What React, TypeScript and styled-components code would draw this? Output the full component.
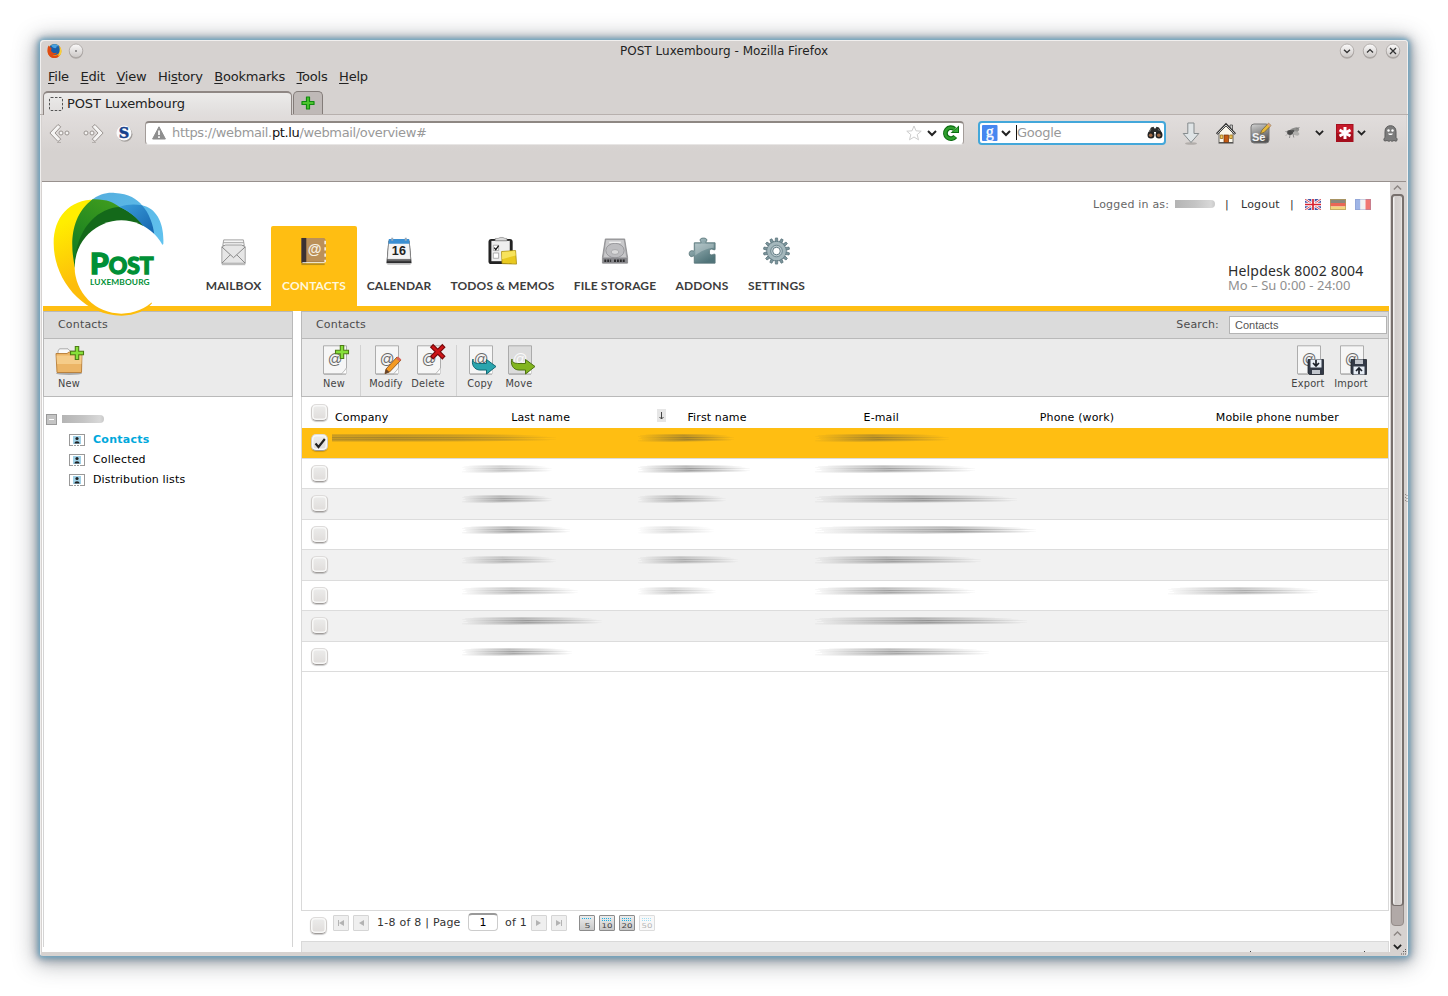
import React from "react";
import styled, { createGlobalStyle, css } from "styled-components";

const UI = `"DejaVu Sans", Verdana, sans-serif`;

const GlobalStyle = createGlobalStyle`
  * { box-sizing: border-box; }
  html, body { margin: 0; background: #fff; }
  body { font-family: ${UI}; color: #222; }
  svg { display: block; flex: none; overflow: visible; }
`;

/* ---------- window frame ---------- */

const Desktop = styled.div`
  width: 1448px;
  height: 996px;
  padding: 40px;
  overflow: hidden;
  background: #fff;
`;

const Window = styled.div`
  width: 1368px;
  height: 916px;
  display: flex;
  flex-direction: column;
  background: #d6d2d0;
  border-radius: 4px 4px 3px 3px;
  box-shadow: inset 1px 1px 0 #f1efee, inset -1px 0 0 #f1efee, 0 0 4px 1px #6aa9c8,
    0 1px 9px 3px rgba(72, 100, 122, 0.55), 0 3px 22px 5px rgba(50, 56, 66, 0.4);
`;

const TitleBar = styled.div`
  height: 24px;
  display: grid;
  grid-template-columns: 200px 1fr 200px;
  align-items: start;
  padding: 0 7px;
  font-size: 12px;
  line-height: 20px;
`;
const TitleSide = styled.div<{ $end?: boolean }>`
  display: flex;
  gap: ${(p) => (p.$end ? 7 : 6)}px;
  padding-top: 3px;
  justify-content: ${(p) => (p.$end ? "flex-end" : "flex-start")};
`;
const TitleText = styled.div`
  padding-top: 1px;
  text-align: center;
  letter-spacing: 0.03px;
`;

const MenuBar = styled.div`
  height: 26px;
  display: flex;
  align-items: center;
  gap: 11.6px;
  padding: 0 8px;
  font-size: 13px;
  line-height: 20px;
  letter-spacing: -0.22px;
`;
const MenuItem = styled.span`
  u { text-underline-offset: 2px; text-decoration-thickness: 1px; }
`;

const TabBar = styled.div`
  height: 25px;
  display: flex;
  align-items: flex-end;
  gap: 1px;
  padding: 0 2px 0 3px;
  border-bottom: 1px solid #b7b0ad;
`;
const Tab = styled.div`
  width: 249px;
  height: 24px;
  margin-bottom: -1px;
  display: flex;
  align-items: center;
  gap: 4px;
  padding: 0 5px 1px;
  border: 1px solid #8f8784;
  border-top-width: 2px;
  border-bottom: 0;
  border-radius: 5px 5px 0 0;
  background: linear-gradient(#ecebea, #e0dddc);
  font-size: 13px;
  letter-spacing: -0.1px;
`;
const NewTab = styled.div`
  width: 30px;
  height: 23px;
  display: flex;
  align-items: center;
  justify-content: center;
  border: 1px solid #837c79;
  border-bottom: 0;
  border-radius: 5px 5px 0 0;
  background: #bfb9b7;
`;

const NavBar = styled.div`
  height: 67px;
  padding: 6px 7px 0 7px;
  display: flex;
  align-items: flex-start;
  border-bottom: 1px solid #98918e;
  background: linear-gradient(#e1dddc, #d6d2d0 36px);
  margin: 0 2px;
`;
const NavIcons = styled.div`
  display: flex;
  width: 96px;
  height: 24px;
  align-items: center;
  gap: 12.5px;
`;
const Field = styled.div<{ $w: number; $active?: boolean }>`
  width: ${(p) => p.$w}px;
  height: 24px;
  display: flex;
  align-items: center;
  padding: 0 3px 1px 4px;
  border: 1px solid #a39c99;
  border-top: 2px solid #8e8783;
  border-bottom-color: #e8e6e5;
  border-radius: 4px;
  background: #fff;
  font-size: 13px;
  line-height: 18px;
  letter-spacing: -0.35px;
  color: #999;
  b { color: #111; font-weight: 400; }
  ${(p) =>
    p.$active &&
    css`
      border: 2px solid #43a7da;
      padding: 0 1px 1px;
      letter-spacing: -0.25px;
    `}
`;
const Grow = styled.span`
  flex: 1;
`;
const Caret = styled.span`
  width: 1px;
  height: 15px;
  margin-left: 5px;
  background: #111;
`;
const AddonIcons = styled.div`
  display: flex;
  align-items: center;
  height: 24px;
  margin-left: 14px;
`;
const Slot = styled.span<{ $w: number; $h?: number }>`
  width: ${(p) => p.$w}px;
  height: ${(p) => (p.$h ? p.$h + "px" : "auto")};
  display: flex;
  align-items: center;
`;

/* ---------- page ---------- */

const Viewport = styled.div`
  height: 770px;
  margin: 0 2px;
  display: flex;
  position: relative;
`;
const Page = styled.div`
  width: 1348px;
  height: 770px;
  padding: 0 1px;
  background: #fff;
  overflow: hidden;
  position: relative;
`;
const Header = styled.div`
  height: 129px;
  border-bottom: 5px solid #ffbe12;
  display: flex;
  justify-content: space-between;
`;
const LogoOverlay = styled.div`
  position: absolute;
  left: 10px;
  top: 8px;
  z-index: 2;
`;
const MainNav = styled.nav`
  display: flex;
  align-items: flex-end;
  padding-left: 153px;
`;
const NavItem = styled.a<{ $w: number; $on?: boolean }>`
  width: ${(p) => p.$w}px;
  height: 80px;
  display: flex;
  flex-direction: column;
  align-items: center;
  padding-top: 11px;
  border-radius: 2px 2px 0 0;
  background: ${(p) => (p.$on ? "#ffbe12" : "transparent")};
  color: ${(p) => (p.$on ? "#fff8dc" : "#3d3d3d")};
  font: 700 12px/16px Lato, "Open Sans", sans-serif;
  letter-spacing: 0.12px;
  white-space: nowrap;
`;
const NavIcon = styled.span`
  height: 41px;
  display: flex;
  align-items: center;
  padding-bottom: 11px;
`;
const HeaderRight = styled.div`
  width: 300px;
  display: flex;
  flex-direction: column;
  justify-content: space-between;
`;
const UserLine = styled.div`
  display: flex;
  align-items: center;
  height: 16px;
  margin-top: 14px;
  font-size: 11px;
  letter-spacing: 0.2px;
  color: #666;
  white-space: nowrap;
`;
const UserBlob = styled.i<{ $w: number }>`
  width: ${(p) => p.$w}px;
  height: 8px;
  border-radius: 0 4px 4px 0;
  background: linear-gradient(90deg, #b4b4b4, #c4c4c4 50%, #d8d8d8 90%, #c9c9c9);
`;
const Pipe = styled.span`
  margin: 0 10px;
  color: #333;
`;
const Dark = styled.span`
  color: #333;
`;
const Flags = styled.span`
  display: flex;
  gap: 9px;
  padding-top: 1px;
`;
const Helpdesk = styled.div`
  padding: 0 0 13px 139px;
  font: 400 14px/15px "Noto Sans", sans-serif;
  letter-spacing: 0.16px;
  white-space: nowrap;
  color: #2c2c2c;
  div + div { color: #8f8f8f; font-size: 13px; letter-spacing: 0.05px; }
`;

const Columns = styled.div`
  display: flex;
  gap: 8px;
  height: 641px;
`;
const Side = styled.aside`
  width: 250px;
  height: 636px;
  display: flex;
  flex-direction: column;
  border: solid #d4d4d4;
  border-width: 0 1px;
`;
const Main = styled.main`
  width: 1088px;
  display: flex;
  flex-direction: column;
`;
const PanelHead = styled.div`
  height: 28px;
  margin: 0 -1px;
  display: flex;
  align-items: center;
  padding: 0 1px 2px 14px;
  border: 1px solid #b9b9b9;
  background: #dbdbdb;
  font-size: 11px;
  letter-spacing: 0.17px;
  color: #4c4c4c;
  ${Main} & { margin: 0; }
`;
const ToolStrip = styled.div`
  height: 58px;
  margin: 0 -1px;
  display: flex;
  padding: 6px 0 0;
  border: 1px solid #b9b9b9;
  border-top: 0;
  background: #ebebeb;
  ${Main} & { margin: 0; }
`;
const ToolButton = styled.div<{ $w: number; $ml?: number }>`
  width: ${(p) => p.$w}px;
  margin-left: ${(p) => p.$ml ?? 0}px;
  display: flex;
  flex-direction: column;
  align-items: center;
  font-size: 9.8px;
  line-height: 14px;
  letter-spacing: 0.2px;
  color: #444;
  white-space: nowrap;
  svg { margin-bottom: 1px; }
`;
const Divider = styled.i<{ $ml: number }>`
  width: 1px;
  margin-left: ${(p) => p.$ml}px;
  background: #d2d2d2;
`;
const SearchInput = styled.span`
  width: 158px;
  height: 18px;
  margin: 2px 0 0 10px;
  padding-left: 5px;
  border: 1px solid #b4b4b4;
  background: #fff;
  font: 11px/17px "Liberation Sans", Arial, sans-serif;
  letter-spacing: 0;
  color: #555;
`;

const Tree = styled.div`
  padding: 12px 0 0 2px;
  font-size: 11px;
  letter-spacing: 0.15px;
  color: #000;
`;
const TreeRow = styled.div<{ $child?: boolean; $on?: boolean }>`
  height: 20px;
  display: flex;
  align-items: center;
  gap: ${(p) => (p.$child ? 8 : 5)}px;
  padding-left: ${(p) => (p.$child ? 23 : 0)}px;
  svg { margin-top: 2px; }
  ${(p) => p.$on && css`color: #00a8dc; font-weight: 700; letter-spacing: 0.25px;`}
`;
const Toggle = styled.i`
  width: 11px;
  height: 11px;
  border: 1px solid #999;
  background: linear-gradient(#fff, #fff) 50% 50% / 5px 1px no-repeat, #c4c4c4;
`;

const Table = styled.div`
  flex: 1;
  border: 1px solid #d9d9d9;
  border-top: 0;
`;
const HeadRow = styled.div`
  height: 31px;
  display: grid;
  grid-template-columns: 33px repeat(4, 176.2px) 176px 1fr;
  font-size: 11px;
  letter-spacing: 0.14px;
  color: #000;
`;
const HeadCell = styled.div`
  padding-top: 14px;
  line-height: 13px;
  display: flex;
  white-space: nowrap;
`;
const SortMark = styled.span`
  width: 9px;
  height: 13px;
  margin: -2px 21px 0 auto;
  background: #e6e6e6;
  padding: 3px 2px;
`;
const Row = styled.div<{ $i: number }>`
  height: ${(p) => (p.$i % 2 ? 30 : 31)}px;
  display: grid;
  grid-template-columns: 30px 130px 176px 177px 353px 1fr;
  border-bottom: 1px solid #dcdcdc;
  background: ${(p) => (p.$i === 0 ? "#ffbe12" : p.$i % 2 ? "#fff" : "#f1f1f1")};
`;
const CheckCell = styled.div<{ $head?: boolean }>`
  padding: ${(p) => (p.$head ? 7 : 6)}px 0 0 9px;
`;
const SmudgeCell = styled.div`
  padding-top: 6px;
  min-width: 0;
`;
const CheckBox = styled.span`
  width: 17px;
  height: 17px;
  display: flex;
  align-items: center;
  justify-content: center;
  border: 1px solid #cfccca;
  border-top-color: #dedcdb;
  border-bottom-color: #a09c9a;
  border-radius: 5px;
  background: linear-gradient(#ececeb, #dfdcda);
  box-shadow: inset 0 0 0 1.5px #f8f8f7, 0 1px 1px rgba(0, 0, 0, 0.2);
`;

const Pager = styled.div`
  height: 30px;
  display: flex;
  align-items: flex-start;
  padding: 4px 0 0 9px;
  font-size: 11px;
  letter-spacing: 0.25px;
  line-height: 16px;
  color: #333;
  white-space: pre;
  ${CheckBox} { margin: 2px 6px 0 0; }
`;
const PagerText = styled.span<{ $w: number }>`
  width: ${(p) => p.$w}px;
`;
const PageBox = styled.span`
  width: 30px;
  height: 18px;
  margin-top: -2px;
  border: 1px solid #ccc;
  border-top: 2px solid #999;
  border-radius: 4px;
  text-align: center;
  line-height: 16px;
  color: #000;
`;
const SmallBtn = styled.span<{ $mr?: number; $strong?: boolean; $faded?: boolean }>`
  width: 16px;
  height: 16px;
  margin-right: ${(p) => p.$mr ?? 4}px;
  border: 1px solid ${(p) => (p.$strong ? "#8c8c8c" : p.$faded ? "#aaa" : "#d5d5d5")};
  border-radius: 1px;
  background: ${(p) => (p.$strong ? "linear-gradient(#ececec,#c8c8c8)" : "#efefef")};
  opacity: ${(p) => (p.$faded ? 0.4 : 1)};
`;
const Footer = styled.div`
  height: 11px;
  border: 1px solid #d9d9d9;
  border-bottom: 0;
  background: #ebebeb;
  display: flex;
  align-items: flex-end;
  justify-content: flex-end;
  padding-right: 23px;
  gap: 113px;
  i { width: 1px; height: 1px; background: #444; }
`;

/* ---------- scrollbar ---------- */

const ScrollBar = styled.div`
  width: 16px;
  display: flex;
  flex-direction: column;
  align-items: center;
  padding-top: 3px;
  padding-right: 1px;
`;
const Track = styled.div`
  width: 13px;
  height: 732px;
  margin: 4px 0 5px;
  background: #b1a9a7;
  border: 1px solid #948c89;
  border-radius: 4px;
`;
const Thumb = styled.div`
  width: 13px;
  height: 712px;
  margin: -1px;
  border: 2px solid #77706d;
  border-width: 2px 2px 1px;
  border-radius: 4px;
  background: linear-gradient(90deg, #f2f1f0 1px, #cfcbc9 2px, #d9d5d3 8px, #f2f1f0 9px);
`;
const Grip = styled.div`
  position: absolute;
  right: -2px;
  top: 312px;
`;
const Corner = styled.div`
  position: absolute;
  right: -1px;
  bottom: -3px;
`;

/* ---------- chrome icons ---------- */

const Chevron = ({ up, color = "#222", w = 10, sw = 2 }: { up?: boolean; color?: string; w?: number; sw?: number }) => (
  <svg width={w} height={w * 0.6} viewBox="0 0 10 6">
    <path d={up ? "M1 5L5 1L9 5" : "M1 1L5 5L9 1"} fill="none" stroke={color} strokeWidth={sw} />
  </svg>
);

const RoundButton = ({ kind }: { kind: "dot" | "down" | "up" | "close" }) => (
  <svg width="16" height="16" viewBox="0 0 16 16">
    <defs>
      <linearGradient id={"rb" + kind} x1="0" y1="0" x2="0" y2="1">
        <stop offset="0" stopColor="#fbfafa" />
        <stop offset="1" stopColor="#cbc7c5" />
      </linearGradient>
    </defs>
    <circle cx="8" cy="8.8" r="7" fill="#8f8a87" opacity="0.6" />
    <circle cx="8" cy="7.8" r="6.8" fill={`url(#rb${kind})`} stroke="#aaa5a2" strokeWidth="0.8" />
    {kind === "dot" && <circle cx="8" cy="8" r="0.8" fill="#333" />}
    {kind === "down" && <path d="M5 6.800L8 9.600L11 6.800" fill="none" stroke="#333" strokeWidth="1.300" />}
    {kind === "up" && <path d="M5 9.400L8 6.600L11 9.400" fill="none" stroke="#333" strokeWidth="1.300" />}
    {kind === "close" && <path d="M5 5L11 11M11 5L5 11" stroke="#333" strokeWidth="1.300" />}
  </svg>
);

const FirefoxIcon = () => (
  <svg width="15" height="16" viewBox="0 -0.500 15 16">
    <circle cx="7.5" cy="7.5" r="7" fill="#f6a01c" />
    <circle cx="7.5" cy="6" r="5.600" fill="#1b5fa8" />
    <path d="M4 1.500C7 .2 11 .4 12.300 3C10 2.400 9 3 9.300 4.600C7 4.900 5 4 4 1.500Z" fill="#4ba3df" />
    <path d="M.6 5C.8 3.500 1.200 2.600 1.800 2C2 3 2.800 3.600 4 4C4.800 5 4.600 5.800 4 6.400C4.400 9.400 7.500 10.200 10.200 9C9.400 11 6.600 11.800 5.400 11.400C7.500 12.800 11.500 12.400 13.600 9.200C13.200 12.300 10.800 14.600 7.500 14.600C3 14.600 -.2 11 .6 5Z" fill="#dd4a14" />
    <path d="M12.300 3C14.400 5 14.900 8 14.200 9.800C13.300 11.800 12 12.500 11 12.800C13 9.500 13 6 12.300 3Z" fill="#f7d23a" />
  </svg>
);

const PlusIcon = () => (
  <svg width="14" height="14" viewBox="0 0 14 14">
    <path d="M5.500 1H8.500V5.500H13V8.500H8.500V13H5.500V8.500H1V5.500H5.500Z" fill="#4cc52e" stroke="#118a10" strokeWidth="1.200" strokeLinejoin="round" />
  </svg>
);

const HistoryArrow = ({ flip }: { flip?: boolean }) => (
  <svg width="21" height="20" viewBox="0 0 21 20">
    <g transform={flip ? "translate(21 0) scale(-1 1)" : undefined}>
      <path d="M8 19.500H12" stroke="#b5b0ad" />
      <path d="M9 1.500L11.800 3.800L6 10L11.800 16.200L9 18.500L.9 10Z" fill="#f5f4f3" stroke="#9a9491" strokeWidth="1" strokeLinejoin="round" />
      <circle cx="12" cy="10" r="2" fill="#f5f4f3" stroke="#9a9491" />
      <circle cx="18" cy="10" r="2" fill="#f5f4f3" stroke="#9a9491" />
    </g>
  </svg>
);

const SBadge = () => (
  <svg width="17" height="17" viewBox="0 0 17 17">
    <circle cx="9" cy="9.300" r="7.500" fill="#8b8785" opacity="0.7" />
    <circle cx="8" cy="8" r="7.500" fill="#fbfbfc" />
    <text x="8" y="13" textAnchor="middle" fontFamily="DejaVu Serif" fontWeight="700" fontSize="14.500" fill="#16418c" stroke="#16418c" strokeWidth="0.500">S</text>
  </svg>
);

const WarningIcon = () => (
  <svg width="14" height="14" viewBox="0 0 14 14">
    <path d="M7 .8L13.400 13H.6Z" fill="#8e8e8e" stroke="#8e8e8e" strokeLinejoin="round" />
    <path d="M7 4.500V9M7 10.300V12" stroke="#fff" strokeWidth="1.700" />
  </svg>
);

const StarIcon = () => (
  <svg width="16" height="16" viewBox="0 0 16 16">
    <path d="M8 1L10 5.800L15.200 6.200L11.200 9.600L12.500 14.800L8 12L3.500 14.800L4.800 9.600L.8 6.200L6 5.800Z" fill="#fff" stroke="#cdcdcd" strokeLinejoin="round" />
  </svg>
);

const ReloadIcon = () => (
  <svg width="17" height="16" viewBox="0 0 17 16">
    <path d="M12.300 11.500A5.500 5.500 0 1 1 11.500 4" fill="none" stroke="#0c6b12" strokeWidth="4.800" />
    <path d="M7.500 8H16V.4Z" fill="#0c6b12" />
    <path d="M12 11.800A5.500 5.500 0 1 1 11.800 4.500" fill="none" stroke="#2f9e2d" strokeWidth="2.600" />
    <path d="M9.800 7H15V2Z" fill="#36a834" />
  </svg>
);

const GoogleIcon = () => (
  <svg width="16" height="16" viewBox="0 0 16 16">
    <rect width="15.500" height="16" rx="1" fill="#4787f0" />
    <text x="7.800" y="11.500" textAnchor="middle" fontFamily="Liberation Serif" fontSize="16" fill="#fff" stroke="#fff" strokeWidth="0.300" letterSpacing="0">g</text>
  </svg>
);

const Binoculars = () => (
  <svg width="16" height="13" viewBox="0 0 16 13">
    <path d="M1 7L4 1.500L6.500 .8L7.500 2.500H8.500L9.500 .8L12 1.500L15 7V10L9 11V6H7V11L1 10Z" fill="#2c2c2c" />
    <circle cx="4" cy="9" r="3.500" fill="#222" />
    <circle cx="12" cy="9" r="3.500" fill="#222" />
    <circle cx="3.700" cy="9.300" r="1.800" fill="#a06a45" />
    <circle cx="11.800" cy="9.300" r="1.800" fill="#a06a45" />
    <path d="M4 3L2.500 6M11 3L12.500 5" stroke="#888" strokeWidth="0.700" />
  </svg>
);

const DownloadIcon = () => (
  <svg width="18" height="23" viewBox="0 0 18 23">
    <ellipse cx="9" cy="21.500" rx="6" ry="1.300" fill="#a19c99" opacity="0.700" />
    <path d="M5.800 1H12V11.500H16.800L9 20.500L1.200 11.500H5.800Z" fill="#dfe4e6" stroke="#858b8d" strokeLinejoin="round" />
  </svg>
);

const HomeIcon = () => (
  <svg width="20" height="21" viewBox="0 0 20 21">
    <path d="M14 2H16.500V7H14Z" fill="#ccc" stroke="#333" strokeWidth="0.700" />
    <path d="M3 10L10 3L17 10V19.500H3Z" fill="#fbf7ec" stroke="#5c5a55" strokeWidth="0.900" />
    <path d="M.8 11L10 1.500L19.200 11" fill="none" stroke="#333" strokeWidth="2.400" />
    <path d="M1.500 10.600L10 2L18.500 10.600" fill="none" stroke="#dedede" strokeWidth="0.900" />
    <rect x="8" y="12" width="4.500" height="7.500" fill="#c55a12" stroke="#6f3006" strokeWidth="0.700" />
    <path d="M4.300 12H6.800V15.500H4.300ZM13.700 12H16.200V15.500H13.700Z" fill="#f5d060" stroke="#9b6a18" strokeWidth="0.800" />
    <path d="M2.500 20H17.500" stroke="#444" />
  </svg>
);

const SeleniumIcon = () => (
  <svg width="22" height="22" viewBox="0 0 22 22">
    <defs>
      <linearGradient id="se" x1="0" y1="0" x2="0.300" y2="1">
        <stop offset="0" stopColor="#d2d2d2" />
        <stop offset="1" stopColor="#555" />
      </linearGradient>
    </defs>
    <rect x="1" y="2" width="18" height="19" rx="3" fill="url(#se)" stroke="#777" />
    <text x="2" y="18.500" fontFamily="Liberation Sans" fontWeight="700" fontSize="11" fill="#f3f3f3">Se</text>
    <path d="M10.500 11.500L12 8L18.500 1.200L21 3.500L14 10.500Z" fill="#e7b93a" stroke="#6d5a2a" strokeWidth="0.700" />
    <path d="M17.300 2.500L19.800 4.700L21 3.500L18.500 1.200Z" fill="#d9a08a" />
  </svg>
);

const FlyIcon = () => (
  <svg width="16" height="14" viewBox="0 0 16 14">
    <ellipse cx="9.500" cy="4.500" rx="5" ry="2.600" fill="#8e8e8c" transform="rotate(-18 9 5)" />
    <ellipse cx="11" cy="7" rx="3.500" ry="2" fill="#b0afad" transform="rotate(20 10 7)" />
    <ellipse cx="5" cy="6.500" rx="3" ry="2.400" fill="#4a4a4a" />
    <path d="M.5 5.500L3 6.300M5 9L4.500 12M8 8L8.800 11.500M2 8.500L1 9.500M11 3L14.500 1.500" stroke="#777" strokeWidth="0.800" fill="none" />
    <circle cx="8" cy="5" r="1.300" fill="#555" />
  </svg>
);

const LastPassIcon = () => (
  <svg width="18" height="18" viewBox="0 0 18 18">
    <rect width="17.500" height="18" fill="#a50f1d" />
    <rect x="1" y="1" width="15.500" height="8" fill="#c5192a" />
    <path d="M9 3V15M3.500 6L14.500 12M14.500 6L3.500 12" stroke="#fff" strokeWidth="3" />
  </svg>
);

const GhostIcon = () => (
  <svg width="15" height="17" viewBox="0 0 15 17">
    <path d="M2 16C.2 16 .8 13 2 12.500V6.500C2 3 4.200 .7 7.500 .7S13 3 13 6.500V12.500C14.200 13 14.800 16 13 16.200L11 15.500L9 16.300L7.500 15.600L6 16.300L4 15.500Z" fill="#7c7c7c" stroke="#5c5c5c" />
    <circle cx="5.500" cy="5.500" r="1.200" fill="#fff" />
    <circle cx="9.500" cy="5.500" r="1.200" fill="#fff" />
    <path d="M5 8.500C6 10.500 9 10.500 10 8.500Z" fill="#fff" />
  </svg>
);

/* ---------- page drawings ---------- */

const Logo = () => (
  <svg width="114" height="128" viewBox="36 30 342 384">
    <defs>
      <linearGradient id="ly" x1="0" y1="0" x2="0.400" y2="1">
        <stop offset="0.200" stopColor="#ffee00" />
        <stop offset="0.700" stopColor="#fdbd0a" />
      </linearGradient>
      <linearGradient id="lg" x1="0.800" y1="0" x2="0.200" y2="1">
        <stop offset="0" stopColor="#45a01d" />
        <stop offset="1" stopColor="#0f7a22" />
      </linearGradient>
      <linearGradient id="lb" x1="0" y1="0" x2="1" y2="1">
        <stop offset="0" stopColor="#55aede" />
        <stop offset="1" stopColor="#63c6f2" />
      </linearGradient>
      <linearGradient id="lm" x1="0" y1="0" x2="1" y2="1">
        <stop offset="0" stopColor="#3a9edb" />
        <stop offset="1" stopColor="#1462ac" />
      </linearGradient>
    </defs>
    <path d="M175 59C90 55 41 110 41 190C41 300 130 407 245 407C285 407 318 392 336 370L240 200Z" fill="url(#ly)" />
    <path d="M153 62C175 42 205 36 225 39C265 40 293 58 306 76C350 85 373 130 370 192L300 250L180 200Z" fill="url(#lb)" />
    <path d="M158 58C200 57 222 68 240 82C275 98 295 118 306 134L240 260L106 268C90 200 88 110 158 58Z" fill="url(#lg)" />
    <path d="M104 262C104 150 170 84 240 81C275 98 295 118 310 136L240 260Z" fill="#14691a" />
    <path d="M238 81C262 72 285 72 306 76C328 100 340 135 343 166L306 134C292 115 270 95 238 81Z" fill="url(#lm)" />
    <circle cx="244" cy="261" r="140" fill="#fff" />
    <text x="150" y="281" fontFamily="Lato" fontWeight="900" fill="#009036" stroke="#009036" strokeWidth="4" textLength="191" lengthAdjust="spacingAndGlyphs">
      <tspan fontSize="88">P</tspan>
      <tspan fontSize="67">OST</tspan>
    </text>
    <text x="150" y="315" fontFamily="Lato" fontWeight="700" fontSize="25" fill="#009036" textLength="179">LUXEMBOURG</text>
  </svg>
);

const MailIcon = () => (
  <svg width="28" height="29" viewBox="0 0 28 31">
    <path d="M3 2H24L25 8H2Z" fill="#f5f5f5" stroke="#8a8a8a" strokeWidth="0.800" />
    <path d="M2.500 5H24.500M2 8H25" stroke="#999" strokeWidth="0.900" />
    <path d="M1 9.500L5 7.500H22L26 9.500V27H1Z" fill="#e6e6e6" stroke="#8a8a8a" strokeWidth="0.800" />
    <path d="M1 9.500L13.500 21L26 9.500M1 27L10 18M26 27L17 18" fill="none" stroke="#777" strokeWidth="0.900" />
    <path d="M1 28.500H26" stroke="#aaa" />
  </svg>
);
const BookIcon = () => (
  <svg width="28" height="30" viewBox="0 0 28 31">
    <rect x="1" y="27" width="24" height="2" fill="#9e7a1c" opacity="0.700" />
    <path d="M1 1H23Q26 1 26 4V26H1Z" fill="#a9824e" />
    <path d="M6 1H23Q25.500 1 25.500 4V25H6Z" fill="#bb9059" />
    <path d="M1 1H6V27H1Z" fill="#3b3132" />
    <path d="M2 26.500H25" stroke="#eee" />
    <path d="M25.500 4V26" stroke="#fff" strokeWidth="1.400" strokeDasharray="3.500 3" />
    <text x="14.500" y="17.500" textAnchor="middle" fontFamily="Liberation Sans" fontSize="14.500" fill="#f7f0e4" letterSpacing="0">@</text>
  </svg>
);
const CalendarIcon = () => (
  <svg width="28" height="30" viewBox="0 0 28 31">
    <path d="M3 4L1 27H27L25 4Z" fill="#2d2d2f" />
    <path d="M3.500 4H24.500L26 23H2Z" fill="#f4f4f4" stroke="#999" strokeWidth="0.500" />
    <path d="M3.500 2H24.500L25 7H3Z" fill="#3b8fd2" />
    <path d="M7 .8V4M21 .8V4" stroke="#9ab" strokeWidth="2" />
    <path d="M2 24.500H26" stroke="#777" />
    <text x="14" y="19" textAnchor="middle" fontFamily="Liberation Sans" fontWeight="700" fontSize="13" fill="#222">16</text>
    <path d="M2 28H26" stroke="#aaa" />
  </svg>
);
const TodoIcon = () => (
  <svg width="32" height="30" viewBox="1 0 32 31">
    <rect x="2" y="2" width="25" height="26" rx="3" fill="#232323" />
    <path d="M5 4H24V25H5Z" fill="#efefef" />
    <path d="M9 4V1.500H12L14 .5H17L19 1.500H21V4Z" fill="#d9d9d9" stroke="#888" strokeWidth="0.700" />
    <path d="M7 8.500H12.500V14H7ZM7 16.500H12.500V22H7Z" fill="#fff" stroke="#999" strokeWidth="0.800" />
    <path d="M8 11L9.500 13L12.500 9" fill="none" stroke="#111" strokeWidth="1.300" />
    <path d="M15.500 15L30 14L31 28L16 27.500Z" fill="#e9c91f" stroke="#a88d10" strokeWidth="0.800" />
    <path d="M16 15.500L29.500 14.500L30 19L16 23Z" fill="#f7e35b" />
  </svg>
);
const DiskIcon = () => (
  <svg width="28" height="30" viewBox="0 0 28 31">
    <path d="M4 2H24L27 21V27H1V21Z" fill="#a9a9ac" stroke="#77777a" strokeWidth="0.700" />
    <path d="M5 3H23L25.500 21H2.500Z" fill="#c9c9cb" />
    <ellipse cx="14" cy="14" rx="9.500" ry="7.500" fill="#bdbdc0" stroke="#8b8b8e" strokeWidth="0.800" />
    <ellipse cx="14" cy="15.500" rx="4" ry="2.500" fill="#dadadb" stroke="#99999b" strokeWidth="0.700" />
    <path d="M8 5.500H20" stroke="#eee" strokeWidth="1.500" />
    <path d="M1.500 21.500H26.500V27H1.500Z" fill="#88888c" />
    <path d="M3 24.500H10M13 24.500H25" stroke="#2c2c2e" strokeWidth="2.500" strokeDasharray="2 1" />
  </svg>
);
const PuzzleIcon = () => (
  <svg width="29" height="30" viewBox="0 0 29 31">
    <defs>
      <linearGradient id="pz" x1="0" y1="0" x2="0.600" y2="1">
        <stop offset="0" stopColor="#b3c6ca" />
        <stop offset="1" stopColor="#507479" />
      </linearGradient>
    </defs>
    <path d="M6 6H13C13.500 5 12 4.500 12 3C12 .5 19 .5 19 3C19 4.500 17.500 5 18 6H27.500V13C26 14 25 11.800 23 12.500C21 14 21 17 23 18.500C25 19 26 17 27.500 18V27H6V20C5 19 4 21 2 20C.3 18.500 .3 16 2 14.500C4 13.500 5 15 6 14Z" fill="url(#pz)" stroke="#587478" strokeWidth="0.900" />
    <path d="M7 7H26V11C20 11 12 15 7 19Z" fill="#fff" opacity="0.250" />
  </svg>
);
const teeth = Array.from({ length: 14 }, (_, i) => (i * 360) / 14);
const GearIcon = () => (
  <svg width="29" height="30" viewBox="0 0 29 31">
    <g fill="#7c959c" stroke="#546e76" strokeWidth="0.700">
      {teeth.map((a) => (
        <path key={a} d="M12.900 6L13.400 1H15.600L16.100 6Z" transform={`rotate(${a} 14.500 14.500)`} />
      ))}
      <circle cx="14.500" cy="14.500" r="10" />
    </g>
    <circle cx="14.500" cy="14.500" r="9.600" fill="#a4b7bc" />
    <circle cx="14.500" cy="14.500" r="6" fill="#bccbd0" stroke="#6c858c" />
    <circle cx="14.500" cy="14.500" r="3.900" fill="#fff" stroke="#5d767e" />
  </svg>
);

const GreenPlus = ({ x, y }: { x: number; y: number }) => (
  <path transform={`translate(${x} ${y})`} d="M5.300 .5H8.700V5.300H13.500V8.700H8.700V13.500H5.300V8.700H.5V5.300H5.300Z" fill="#86e03a" stroke="#4d7d14" strokeWidth="1.100" />
);

const FolderNewIcon = () => (
  <svg width="36" height="31" viewBox="0 0 36 31">
    <ellipse cx="18" cy="28.500" rx="13" ry="1.500" fill="#aaa" />
    <path d="M7 6L8.500 3.800H17L19 6H28V12H7Z" fill="#fafafa" stroke="#999" strokeWidth="0.800" />
    <path d="M5 8.500H16L18 7H31L30.500 27.500H6Z" fill="#ecb566" stroke="#b57c35" strokeWidth="0.900" />
    <path d="M5.500 10.500H30.800L30.300 19H6Z" fill="#f9d698" opacity="0.700" />
    <GreenPlus x={19} y={1} />
  </svg>
);

type DocKind = "new" | "modify" | "delete" | "copy" | "move" | "export" | "import";
const DocIcon = ({ kind }: { kind: DocKind }) => (
  <svg width="36" height="31" viewBox="0 0 36 31">
    <path d="M8 29.500H30" stroke="#bdbdbd" />
    <path d="M7.500 .8H30.500V23L26 28.800H7.500Z" fill={kind === "move" ? "#dcdcdc" : "#f6f6f6"} stroke="#a5a5a5" strokeWidth="0.900" />
    <path d="M30.500 23.500L26 28.500H30.500Z" fill="#fff" stroke="#bbb" strokeWidth="0.600" />
    <text x="19" y="18.500" textAnchor="middle" fontFamily="Liberation Sans" fontSize="14.500" letterSpacing="0" fill={kind === "move" ? "#fafafa" : "#6b6b6b"}>@</text>
    {kind === "new" && <GreenPlus x={19} y={0} />}
    {kind === "modify" && (
      <>
        <path d="M17 28.500L18 24L29 12L33 15L21.500 27Z" fill="#f49a22" stroke="#8d541b" strokeWidth="0.900" />
        <path d="M16.800 29L18 24L21.500 27Z" fill="#65432c" />
        <path d="M28 13.500L31.500 16.500L33.300 14.500L30 11.500Z" fill="#d9645a" />
      </>
    )}
    {kind === "delete" && <path d="M21.500 .5L34 13M34 .5L21.500 13" stroke="#77090b" strokeWidth="4.600" />}
    {kind === "delete" && <path d="M22.300 1.300L33.200 12.200M33.200 1.300L22.300 12.200" stroke="#cd1518" strokeWidth="2.600" />}
    {(kind === "copy" || kind === "move") && (
      <path
        d="M11 14C11 18 14 18.500 18 18.500H24.500V14.500L34 21.500L24.500 29V25H18C12 25 9 19 11 14Z"
        fill={kind === "copy" ? "#2aa5ae" : "#82b51f"}
        stroke={kind === "copy" ? "#136a76" : "#4f7312"}
        strokeWidth="1"
      />
    )}
    {(kind === "export" || kind === "import") && (
      <g>
        <path d="M18 14.500H33.500V29.500H19.500L18 28Z" fill="#333a47" stroke="#1e232c" strokeWidth="0.800" />
        {kind === "export" ? (
          <>
            <rect x="20.500" y="14.500" width="11" height="8" fill="#e7edf5" />
            <path d="M26 15V20M23 18L26 21L29 18" stroke="#1a1f28" strokeWidth="1.700" fill="none" />
            <path d="M22 25H30V29H22Z" fill="#c1c5cc" />
          </>
        ) : (
          <>
            <path d="M22 14.500H30V19H22Z" fill="#c1c5cc" />
            <rect x="20.500" y="21.500" width="11" height="8" fill="#e7edf5" />
            <path d="M26 29V24M23 26L26 23L29 26" stroke="#1a1f28" strokeWidth="1.700" fill="none" />
          </>
        )}
      </g>
    )}
  </svg>
);

const CardIcon = () => (
  <svg width="16" height="12" viewBox="0 0 16 12">
    <rect x="0.500" y="0.500" width="15" height="11" fill="#fff" stroke="#999" />
    <rect x="4" y="2" width="8" height="8" fill="#9fd0e6" />
    <circle cx="8" cy="4.500" r="1.600" fill="#222" />
    <path d="M5.500 9.500C5.500 6.500 10.500 6.500 10.500 9.500Z" fill="#222" />
    <path d="M4 11.500H12" stroke="#fff" strokeDasharray="1 2" />
  </svg>
);

const FlagUK = () => (
  <svg width="16" height="11" viewBox="0 0 16 11">
    <defs>
      <clipPath id="uk"><rect width="16" height="11" /></clipPath>
    </defs>
    <g clipPath="url(#uk)">
      <rect width="16" height="11" fill="#4454a3" />
      <path d="M0 0L16 11M16 0L0 11" stroke="#fff" strokeWidth="2.400" />
      <path d="M0 0L16 11M16 0L0 11" stroke="#d2343f" strokeWidth="0.900" />
      <path d="M8 0V11M0 5.500H16" stroke="#fff" strokeWidth="3.400" />
      <path d="M8 0V11M0 5.500H16" stroke="#d8212f" strokeWidth="1.700" />
    </g>
  </svg>
);
const FlagDE = () => (
  <svg width="16" height="11" viewBox="0 0 16 11">
    <rect width="16" height="4" fill="#8a877d" />
    <rect y="4" width="16" height="3.500" fill="#ea6656" />
    <rect y="7.500" width="16" height="3.500" fill="#f3d67f" />
    <rect x="0.500" y="0.500" width="15" height="10" fill="none" stroke="#b59a58" opacity="0.700" />
  </svg>
);
const FlagFR = () => (
  <svg width="16" height="11" viewBox="0 0 16 11">
    <rect width="5.500" height="11" fill="#9fb5e6" />
    <rect x="5.500" width="5" height="11" fill="#f2f2f2" />
    <rect x="10.500" width="5.500" height="11" fill="#f07772" />
    <rect x="0.500" y="0.500" width="15" height="10" fill="none" stroke="#7d8cc0" opacity="0.350" />
  </svg>
);

/* Streaks that hide a private value: a stack of one-pixel lines fading at both ends. */
const streaks = [
  { o: 0.3, from: 0.08, to: 0.85 },
  { o: 0.45, from: 0.02, to: 0.93 },
  { o: 0.4, from: 0, to: 0.96 },
  { o: 0.65, from: 0.03, to: 1 },
  { o: 0.45, from: 0.01, to: 0.95 },
  { o: 0.6, from: 0.04, to: 1 },
  { o: 0.45, from: 0, to: 0.97 },
  { o: 0.2, from: 0, to: 0.75 },
];
const Smudge = ({ id, w, peak = 0.45, dark = 0.6, solid }: { id: string; w: number; peak?: number; dark?: number; solid?: boolean }) => (
  <svg width={w} height="9" viewBox={`0 0 ${w} 9`}>
    <defs>
      <linearGradient id={id}>
        <stop offset="0" stopColor="#444" stopOpacity={solid ? 0.7 : 0.08} />
        <stop offset={peak * 0.5} stopColor="#444" stopOpacity={solid ? 0.8 : 0.5} />
        <stop offset={peak} stopColor="#444" stopOpacity={solid ? 0.7 : 0.85} />
        <stop offset={peak + (1 - peak) * 0.5} stopColor="#444" stopOpacity="0.480" />
        <stop offset="1" stopColor="#444" stopOpacity="0.030" />
      </linearGradient>
    </defs>
    {streaks.map((s, i) => (
      <rect key={i} x={solid ? 0 : s.from * w} y={i} width={(s.to - (solid ? 0 : s.from)) * w} height="1" fill={`url(#${id})`} opacity={Math.min(1, s.o * dark * 1.15)} />
    ))}
  </svg>
);

type Mark = { w: number; peak?: number; dark?: number; solid?: boolean };
const rows: (Mark | null)[][] = [
  [{ w: 224, peak: 0.55, dark: 0.8, solid: true }, null, { w: 96, peak: 0.5, dark: 0.85 }, { w: 134, dark: 0.8 }, null],
  [null, { w: 90, dark: 0.55 }, { w: 112, dark: 0.85 }, { w: 160, dark: 0.8 }, null],
  [null, { w: 90, dark: 0.75 }, { w: 88, dark: 0.65 }, { w: 202, peak: 0.52, dark: 0.85 }, null],
  [null, { w: 108, dark: 0.85 }, { w: 76, dark: 0.35 }, { w: 221, peak: 0.65, dark: 0.85 }, null],
  [null, { w: 94, dark: 0.6 }, { w: 100, dark: 0.65 }, { w: 166, dark: 0.8 }, null],
  [null, { w: 116, dark: 0.65 }, { w: 78, dark: 0.5 }, { w: 160, dark: 0.8 }, { w: 150, peak: 0.5, dark: 0.7 }],
  [null, { w: 140, dark: 0.8 }, null, { w: 212, peak: 0.52, dark: 0.85 }, null],
  [null, { w: 110, dark: 0.8 }, null, { w: 174, dark: 0.8 }, null],
];

const Tick = () => (
  <svg width="12" height="12" viewBox="0 0 12 12">
    <path d="M1.500 6.500L4.500 10L10.800 2" fill="none" stroke="#222" strokeWidth="2.100" />
  </svg>
);

const Arrow = ({ kind }: { kind: "first" | "prev" | "next" | "last" }) => (
  <svg width="14" height="14" viewBox="0 0 14 14">
    <g transform={kind === "next" || kind === "last" ? "translate(14 0) scale(-1 1)" : undefined} fill="#b3b3b3">
      <path d="M10 4V10L5 7Z" />
      {(kind === "first" || kind === "last") && <rect x="4" y="4" width="1" height="6" />}
    </g>
  </svg>
);

const SizeGlyph = ({ n }: { n: string }) => (
  <svg width="14" height="14" viewBox="0 0 14 14">
    <path d="M2 2.500H12" stroke="#19aee4" strokeDasharray="1 1" />
    {n !== "5" && <path d="M2 4.500H12" stroke="#19aee4" strokeDasharray="1 1" />}
    <text x={n === "5" ? 4.5 : 1.5} y="12" fontFamily="DejaVu Sans" fontSize="6.500" fill="#444" letterSpacing="0" textLength={n === "5" ? 6 : 11} lengthAdjust="spacingAndGlyphs">{n}</text>
  </svg>
);

const navItems = [
  { label: "MAILBOX", w: 75, icon: <MailIcon /> },
  { label: "CONTACTS", w: 86, icon: <BookIcon />, on: true },
  { label: "CALENDAR", w: 84, icon: <CalendarIcon /> },
  { label: "TODOS & MEMOS", w: 123, icon: <TodoIcon /> },
  { label: "FILE STORAGE", w: 102, icon: <DiskIcon /> },
  { label: "ADDONS", w: 72, icon: <PuzzleIcon /> },
  { label: "SETTINGS", w: 77, icon: <GearIcon /> },
];

export default function App() {
  return (
    <Desktop>
      <GlobalStyle />
      <Window>
        <TitleBar>
          <TitleSide>
            <FirefoxIcon />
            <RoundButton kind="dot" />
          </TitleSide>
          <TitleText>POST Luxembourg - Mozilla Firefox</TitleText>
          <TitleSide $end>
            <RoundButton kind="down" />
            <RoundButton kind="up" />
            <RoundButton kind="close" />
          </TitleSide>
        </TitleBar>
        <MenuBar>
          <MenuItem><u>F</u>ile</MenuItem>
          <MenuItem><u>E</u>dit</MenuItem>
          <MenuItem><u>V</u>iew</MenuItem>
          <MenuItem>Hi<u>s</u>tory</MenuItem>
          <MenuItem><u>B</u>ookmarks</MenuItem>
          <MenuItem><u>T</u>ools</MenuItem>
          <MenuItem><u>H</u>elp</MenuItem>
        </MenuBar>
        <TabBar>
          <Tab>
            <svg width="14" height="14" viewBox="0 0 14 14">
              <rect x="0.500" y="0.500" width="13" height="13" rx="1.500" fill="none" stroke="#555" strokeDasharray="2.500 1.500" />
            </svg>
            POST Luxembourg
          </Tab>
          <NewTab><PlusIcon /></NewTab>
        </TabBar>
        <NavBar>
          <NavIcons>
            <HistoryArrow />
            <HistoryArrow flip />
            <SBadge />
          </NavIcons>
          <Field $w={819}>
            <Slot $w={22}><Slot $w={2} /><WarningIcon /></Slot>
            <span>https://webmail.<b>pt.lu</b>/webmail/overview#</span>
            <Grow />
            <Slot $w={21}><StarIcon /></Slot>
            <Slot $w={16}><Chevron /></Slot>
            <ReloadIcon />
          </Field>
          <Slot $w={14} />
          <Field $w={188} $active>
            <Slot $w={1} />
            <Slot $w={19}><GoogleIcon /></Slot>
            <Chevron />
            <Caret />
            <span>Google</span>
            <Grow />
            <Binoculars />
          </Field>
          <AddonIcons>
            <Slot $w={36}><Slot $w={2} /><DownloadIcon /></Slot>
            <Slot $w={34}><HomeIcon /></Slot>
            <Slot $w={35}><SeleniumIcon /></Slot>
            <Slot $w={30}><FlyIcon /></Slot>
            <Slot $w={21}><Chevron w={9} /></Slot>
            <Slot $w={21}><LastPassIcon /></Slot>
            <Slot $w={26}><Chevron w={9} /></Slot>
            <GhostIcon />
          </AddonIcons>
        </NavBar>
        <Viewport>
          <Page>
            <LogoOverlay><Logo /></LogoOverlay>
            <Header>
              <MainNav>
                {navItems.map((n) => (
                  <NavItem key={n.label} $w={n.w} $on={n.on}>
                    <NavIcon>{n.icon}</NavIcon>
                    {n.label}
                  </NavItem>
                ))}
              </MainNav>
              <HeaderRight>
                <UserLine>
                  <Slot $w={4} />
                  <Slot $w={82}>Logged in as:</Slot>
                  <UserBlob $w={40} />
                  <Slot $w={26}><Pipe>|</Pipe></Slot>
                  <Slot $w={39}><Dark>Logout</Dark></Slot>
                  <Slot $w={25}><Pipe>|</Pipe></Slot>
                  <Flags><FlagUK /><FlagDE /><FlagFR /></Flags>
                </UserLine>
                <Helpdesk>
                  <div>Helpdesk 8002 8004</div>
                  <div>Mo – Su 0:00 - 24:00</div>
                </Helpdesk>
              </HeaderRight>
            </Header>
            <Columns>
              <Side>
                <PanelHead>Contacts</PanelHead>
                <ToolStrip>
                  <ToolButton $w={36} $ml={7}><FolderNewIcon />New</ToolButton>
                </ToolStrip>
                <Tree>
                  <TreeRow><Toggle /><UserBlob $w={42} /></TreeRow>
                  <TreeRow $child $on><CardIcon />Contacts</TreeRow>
                  <TreeRow $child><CardIcon />Collected</TreeRow>
                  <TreeRow $child><CardIcon />Distribution lists</TreeRow>
                </Tree>
              </Side>
              <Main>
                <PanelHead>
                  Contacts
                  <Grow />
                  Search:
                  <SearchInput>Contacts</SearchInput>
                </PanelHead>
                <ToolStrip>
                  <ToolButton $w={36} $ml={14}><DocIcon kind="new" />New</ToolButton>
                  <Divider $ml={8} />
                  <ToolButton $w={40} $ml={5}><DocIcon kind="modify" />Modify</ToolButton>
                  <ToolButton $w={40} $ml={2}><DocIcon kind="delete" />Delete</ToolButton>
                  <Divider $ml={8} />
                  <ToolButton $w={34} $ml={6}><DocIcon kind="copy" />Copy</ToolButton>
                  <ToolButton $w={34} $ml={5}><DocIcon kind="move" />Move</ToolButton>
                  <Grow />
                  <ToolButton $w={40}><DocIcon kind="export" />Export</ToolButton>
                  <ToolButton $w={40} $ml={3}><DocIcon kind="import" />Import</ToolButton>
                  <Slot $w={17} />
                </ToolStrip>
                <Table>
                  <HeadRow>
                    <CheckCell $head><CheckBox /></CheckCell>
                    <HeadCell>Company</HeadCell>
                    <HeadCell>
                      Last name
                      <SortMark>
                        <svg width="5" height="8" viewBox="0 0 5 8">
                          <path d="M2.500 0V7M.5 5L2.500 7L4.500 5" fill="none" stroke="#444" />
                        </svg>
                      </SortMark>
                    </HeadCell>
                    <HeadCell>First name</HeadCell>
                    <HeadCell>E-mail</HeadCell>
                    <HeadCell>Phone (work)</HeadCell>
                    <HeadCell>Mobile phone number</HeadCell>
                  </HeadRow>
                  {rows.map((marks, i) => (
                    <Row key={i} $i={i}>
                      <CheckCell><CheckBox>{i === 0 && <Tick />}</CheckBox></CheckCell>
                      {marks.map((m, j) => (
                        <SmudgeCell key={j}>{m && <Smudge id={`s${i}-${j}`} {...m} />}</SmudgeCell>
                      ))}
                    </Row>
                  ))}
                </Table>
                <Pager>
                  <CheckBox />
                  <SmallBtn><Arrow kind="first" /></SmallBtn>
                  <SmallBtn $mr={8}><Arrow kind="prev" /></SmallBtn>
                  <PagerText $w={91}>1-8 of 8 | Page</PagerText>
                  <PageBox>1</PageBox>
                  <Slot $w={7} />
                  <PagerText $w={26}>of 1</PagerText>
                  <SmallBtn><Arrow kind="next" /></SmallBtn>
                  <SmallBtn $mr={12}><Arrow kind="last" /></SmallBtn>
                  <SmallBtn $strong><SizeGlyph n="5" /></SmallBtn>
                  <SmallBtn $strong><SizeGlyph n="10" /></SmallBtn>
                  <SmallBtn $strong><SizeGlyph n="20" /></SmallBtn>
                  <SmallBtn $faded><SizeGlyph n="50" /></SmallBtn>
                </Pager>
                <Footer><i /><i /></Footer>
              </Main>
            </Columns>
          </Page>
          <ScrollBar>
            <Chevron up w={9} color="#8c8683" sw={1.6} />
            <Track><Thumb /></Track>
            <Chevron up w={9} color="#8c8683" sw={1.6} />
            <Slot $w={1} $h={7} />
            <Chevron w={9} />
          </ScrollBar>
          <Grip>
            <svg width="3" height="9" viewBox="0 0 3 9">
              <path d="M.5 0V9M2 1V9" stroke="#8f8986" strokeDasharray="1 2" />
            </svg>
          </Grip>
          <Corner>
            <svg width="7" height="6" viewBox="0 0 7 6">
              <path d="M5 .5H6M3 2.500H4M5 2.500H6M1 5H2M3 5H4M5 5H6" stroke="#5f5a58" />
            </svg>
          </Corner>
        </Viewport>
      </Window>
    </Desktop>
  );
}
